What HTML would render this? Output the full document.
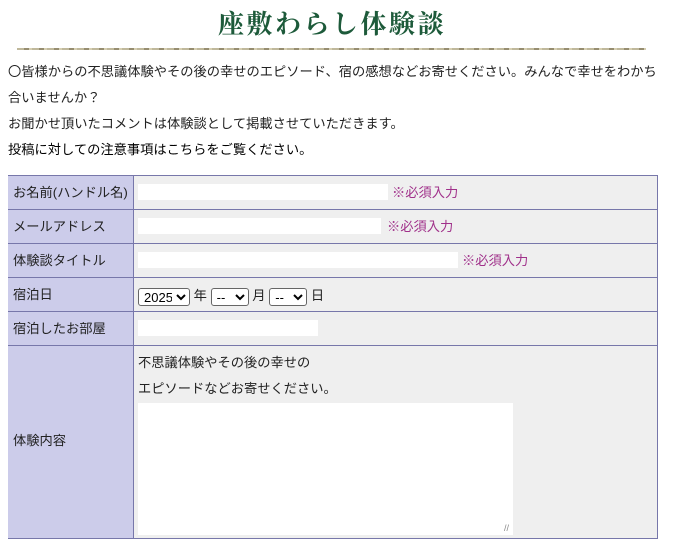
<!DOCTYPE html>
<html><head><meta charset="utf-8"><style>
body{margin:0;background:#fff;font-family:"Liberation Sans","Noto Sans CJK JP",sans-serif;font-size:13.25px;color:#222;position:relative;width:680px;height:557px;overflow:hidden}
.a{position:absolute;white-space:nowrap}
.title{left:218px;top:4px;font-family:"Liberation Serif","Noto Serif CJK SC",serif;font-size:26px;font-weight:bold;color:#1d5a3a;letter-spacing:2.5px}
.line{left:17px;top:48px;width:629px;height:2px;background:repeating-linear-gradient(90deg,#b8b090 0 7px,#8a8060 7px 12px,#d0c8a8 12px 15px);opacity:.9}
.tb{position:absolute;left:8px;top:175px;width:650px;height:364px;border:1px solid #7777aa;box-sizing:border-box;background:#efefef}
.lab{position:absolute;left:8px;width:126px;background:#ccccea;border-right:1px solid #7777aa;box-sizing:border-box}
.hr{position:absolute;left:8px;width:650px;height:1px;background:#7777aa}
.in{position:absolute;background:#fff;height:16px}
.req{color:#a0308a}
select{font:13px "Liberation Sans",sans-serif;height:18px;padding:0 1px;border:1px solid #666;border-radius:3px;background:#fff;color:#000;vertical-align:middle}
</style></head><body>
<div class="a title">座敷わらし体験談</div>
<div class="a line"></div>
<div class="a" style="left:8px;top:61px">〇皆様からの不思議体験やその後の幸せのエピソード、宿の感想などお寄せください。みんなで幸せをわかち</div>
<div class="a" style="left:8px;top:87px">合いませんか？</div>
<div class="a" style="left:8px;top:113px">お聞かせ頂いたコメントは体験談として掲載させていただきます。</div>
<div class="a" style="left:8px;top:139px;color:#000">投稿に対しての注意事項はこちらをご覧ください。</div>
<div class="tb"></div>
<div class="lab" style="top:176px;height:362px"></div>
<div class="hr" style="top:209px"></div><div class="hr" style="top:243px"></div><div class="hr" style="top:277px"></div><div class="hr" style="top:311px"></div><div class="hr" style="top:345px"></div>
<div class="a" style="left:13px;top:182px">お名前(ハンドル名)</div>
<div class="a" style="left:13px;top:216px">メールアドレス</div>
<div class="a" style="left:13px;top:250px">体験談タイトル</div>
<div class="a" style="left:13px;top:284px">宿泊日</div>
<div class="a" style="left:13px;top:318px">宿泊したお部屋</div>
<div class="a" style="left:13px;top:430px">体験内容</div>
<div class="in" style="left:138px;top:184px;width:250px"></div><div class="a req" style="left:392px;top:182px">※必須入力</div>
<div class="in" style="left:138px;top:218px;width:243px"></div><div class="a req" style="left:387px;top:216px">※必須入力</div>
<div class="in" style="left:138px;top:252px;width:320px"></div><div class="a req" style="left:462px;top:250px">※必須入力</div>
<div class="a" style="left:138px;top:285px"><select style="width:52px"><option>2025</option></select> 年 <select style="width:38px"><option>--</option></select> 月 <select style="width:38px"><option>--</option></select> 日</div>
<div class="in" style="left:138px;top:320px;width:180px"></div>
<div class="a" style="left:138px;top:352px">不思議体験やその後の幸せの</div>
<div class="a" style="left:138px;top:378px">エピソードなどお寄せください。</div>
<div class="in" style="left:138px;top:403px;width:375px;height:132px"></div>
<div class="a" style="left:504px;top:523px;font-size:9px;color:#888">//</div>
</body></html>
